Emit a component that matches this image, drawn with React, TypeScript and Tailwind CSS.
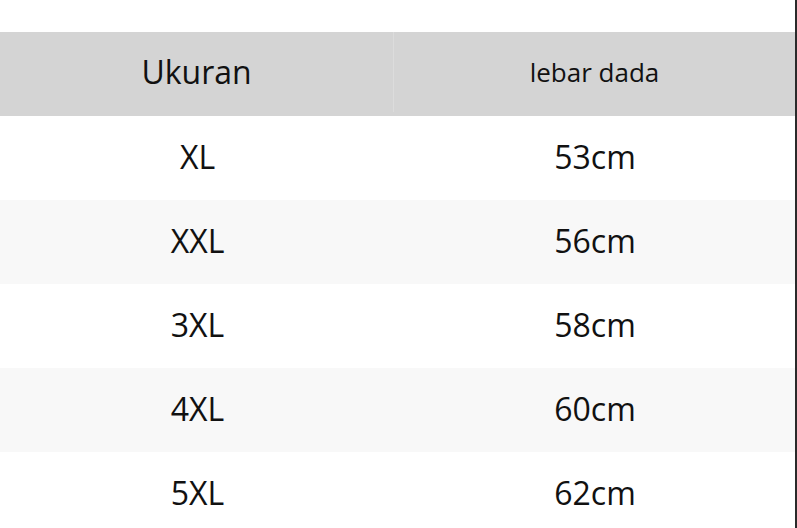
const ROWS: [string, string][] = [
  ['XL', '53cm'],
  ['XXL', '56cm'],
  ['3XL', '58cm'],
  ['4XL', '60cm'],
  ['5XL', '62cm'],
]

export default function App() {
  return (
    <div
      className="flex h-[528px] w-[797px] overflow-hidden bg-white text-[#111]"
      style={{ fontFamily: '"Open Sans", "Noto Sans", sans-serif' }}
    >
      <div className="flex w-[795px] flex-col pt-[32px]">
        {/* header */}
        <div className="flex h-[84px] shrink-0 bg-[#d4d4d4] pb-[4px]">
          <div className="flex w-[394px] items-center justify-center border-r border-[#dcdcdc] text-[32px]">
            Ukuran
          </div>
          <div className="flex flex-1 items-center justify-center text-[26px]">lebar dada</div>
        </div>

        {ROWS.map(([size, chest], i) => (
          <div
            key={size}
            className={`flex h-[84px] shrink-0 pb-[2px] text-[32px] ${i % 2 === 1 ? 'bg-[#f8f8f8]' : 'bg-white'}`}
          >
            <div className="flex w-[395px] items-center justify-center">{size}</div>
            <div className="flex flex-1 items-center justify-center">{chest}</div>
          </div>
        ))}
      </div>
      <div className="w-[2px] shrink-0 bg-[#2a2a2a]" />
    </div>
  )
}
